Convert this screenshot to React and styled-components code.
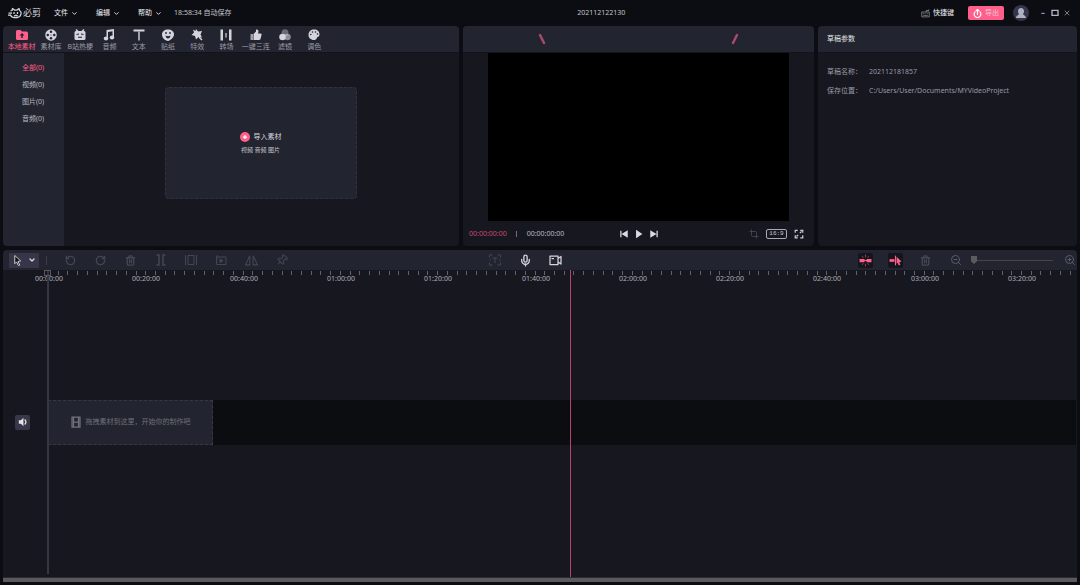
import React from 'react';
import styled, { createGlobalStyle } from 'styled-components';
import { ChevronDown, RotateCcw, RotateCw, Trash2, Pin, Mic, ZoomIn, ZoomOut, Crop, X } from 'lucide-react';

const PINK = '#ff5f8b';
const PX_PER_TICK = 9.73;
const TICK_COUNT = 106;
const LABEL_COUNT = 11;

const GlobalStyle = createGlobalStyle`
* {
  box-sizing: border-box;
}

body {
  margin: 0;
  background-color: #0c0d12;
  color: #b9bac2;
  font-family: "Noto Sans", "Noto Sans CJK SC", sans-serif;
  font-size: 7px;
  line-height: 10px;
}

button {
  margin: 0;
  padding: 0;
  border: 0;
  background: none;
  color: inherit;
  font: inherit;
  cursor: pointer;
}

svg {
  display: block;
  flex: none;
}
`;

const Page = styled.div`
  display: flex;
  flex-direction: column;
  min-height: 100vh;
  padding: 0 3px 3px;
`;

const TitleBar = styled.header`
  display: flex;
  align-items: center;
  height: 26px;
  padding: 0 6px 0 5px;
`;

const Brand = styled.div`
  display: flex;
  align-items: center;
  gap: 1px;
  width: 46px;
  font-size: 9px;
  color: #d6d7de;
`;

const MenuButton = styled.button`
  display: flex;
  align-items: center;
  gap: 3px;
  width: 42px;
  color: #eeeef2;
`;

const AutoSave = styled.span`
  white-space: nowrap;
  margin-left: -6px;
  color: #c3c4cb;
`;

const ProjectTitle = styled.h1`
  flex: 1;
  margin: 0;
  padding-left: 50px;
  text-align: center;
  font-size: 7px;
  font-weight: normal;
  color: #c3c4cb;
`;

const Shortcut = styled.button`
  display: flex;
  align-items: center;
  gap: 3px;
  margin-right: 14px;
  color: #eeeef2;
`;

const ExportButton = styled.button`
  display: flex;
  align-items: center;
  justify-content: center;
  gap: 3px;
  width: 36px;
  height: 14px;
  border-radius: 2px;
  background-color: ${PINK};
  color: #ffc4d4;
`;

const Avatar = styled.button`
  margin: 0 10px 0 9px;
`;

const WindowButtons = styled.div`
  display: flex;
  align-items: center;
  gap: 4px;
  color: #b3b4c4;
`;

const Workspace = styled.main`
  display: grid;
  grid-template-columns: 456fr 351fr 259fr;
  gap: 4px;
`;

const Panel = styled.section`
  display: flex;
  flex-direction: column;
  min-width: 0;
  border-radius: 4px;
  background-color: #171720;
  overflow: hidden;
`;

const PanelHeader = styled.div`
  display: flex;
  align-items: center;
  height: 27px;
  flex: none;
  background-color: #22242f;
  border-bottom: 1px solid #13131b;
`;

const TabBar = styled(PanelHeader)`
  padding-left: 4px;
`;

const Tabs = styled.div`
  display: flex;
  width: 322px;
  padding-top: 2px;
`;

const Tab = styled.button`
  flex: 1 1 0;
  display: flex;
  flex-direction: column;
  align-items: center;
  gap: 1px;
  white-space: nowrap;
  color: ${(props) => (props.$active ? PINK : '#9c9da8')};

  svg {
    color: ${(props) => (props.$active ? PINK : '#d3d4de')};
  }
`;

const LibraryBody = styled.div`
  display: flex;
  flex: 1;
`;

const Categories = styled.nav`
  display: flex;
  flex-direction: column;
  width: 61px;
  padding-top: 6px;
  background-color: #22242f;
`;

const Category = styled.button`
  height: 17px;
  padding-right: 1px;
  color: ${(props) => (props.$active ? PINK : '#b9bac2')};
`;

const MediaArea = styled.div`
  flex: 1;
  display: flex;
  align-items: flex-start;
  justify-content: center;
  padding: 34px 2px 0 0;
`;

const DropZone = styled.button`
  display: flex;
  flex-direction: column;
  align-items: center;
  justify-content: center;
  gap: 3px;
  width: 192px;
  height: 112px;
  border: 1px dashed #2f313d;
  border-radius: 4px;
  background-color: #22242f;
`;

const DropTitle = styled.span`
  display: flex;
  align-items: center;
  gap: 4px;
  color: #d6d7de;
`;

const DropHint = styled.span`
  font-size: 6px;
  color: #c3c4cb;
`;

const PreviewHeader = styled(PanelHeader)`
  justify-content: space-between;
  padding: 0 75px;
`;

const Screen = styled.div`
  height: 168px;
  margin: 0 25px;
  background-color: #000;
`;

const PlayerBar = styled.div`
  display: grid;
  grid-template-columns: 1fr auto 1fr;
  align-items: center;
  height: 25px;
  padding: 0 6px;
`;

const Times = styled.div`
  display: flex;
  align-items: center;
`;

const CurrentTime = styled.span`
  color: #c74a70;
`;

const TimeDivider = styled.span`
  width: 1px;
  height: 6px;
  margin: 0 10px 0 9px;
  background-color: #6d6e79;
`;

const Transport = styled.div`
  display: flex;
  gap: 5px;
  color: #d9dae3;
`;

const ViewTools = styled.div`
  display: flex;
  justify-content: flex-end;
  align-items: center;
  gap: 7px;
  padding-right: 4px;
  color: #c8c9d2;
`;

const Ratio = styled.button`
  width: 21px;
  height: 10px;
  border: 1px solid #a9aab4;
  border-radius: 2px;
  font-family: "Liberation Mono", monospace;
  font-size: 6px;
  line-height: 8px;
`;

const CropButton = styled.button`
  color: #484956;
`;

const ParamsHeader = styled(PanelHeader)`
  padding-left: 9px;
  color: #e4e4ea;
`;

const Params = styled.dl`
  display: grid;
  grid-template-columns: 42px 1fr;
  row-gap: 9px;
  margin: 0;
  padding: 14px 9px;
  color: #9899a3;

  dt, dd {
    margin: 0;
    white-space: nowrap;
  }
`;

const Timeline = styled(Panel)`
  flex: 1;
  margin-top: 4px;
  border-radius: 4px 4px 0 0;
`;

const Toolbar = styled.div`
  display: flex;
  align-items: center;
  height: 20px;
  flex: none;
  padding-left: 6px;
  background-color: #22242f;
`;

const SelectMode = styled.button`
  display: flex;
  align-items: center;
  justify-content: space-around;
  width: 30px;
  height: 15px;
  border-radius: 1px;
  background-color: #353748;
  color: #d6d7de;
`;

const Divider = styled.span`
  width: 1px;
  height: 9px;
  margin: 0 8px 0 7px;
  background-color: #3b3c47;
`;

const ToolGroup = styled.div`
  display: flex;
  width: ${(props) => props.$width}px;
`;

const Tool = styled.button`
  flex: 1 1 0;
  display: flex;
  align-items: center;
  justify-content: center;
  height: 16px;
  color: ${(props) => (props.$bright ? '#d3d4de' : '#444656')};
`;

const Spacer = styled.span`
  flex: ${(props) => props.$grow} 1 0;
`;

const ToggleBox = styled.span`
  display: flex;
  align-items: center;
  justify-content: center;
  width: 15px;
  height: 15px;
  border-radius: 2px;
  background-color: #15151d;
`;

const ZoomSlider = styled.input`
  appearance: none;
  width: 82px;
  height: 10px;
  margin: 0 11px 0 0;
  background: linear-gradient(#45464a, #45464a) center / 100% 1px no-repeat;

  &::-webkit-slider-thumb {
    appearance: none;
    width: 6px;
    height: 8px;
    background-color: #5b5b5e;
    clip-path: polygon(0 0, 100% 0, 100% 65%, 50% 100%, 0 65%);
  }
`;

const ZoomInButton = styled.button`
  margin-right: 1px;
  color: #5b5d70;
`;

const ZoomOutButton = styled(Tool)`
  color: #5b5d70;
`;

const TimelineBody = styled.div`
  position: relative;
  display: flex;
  flex-direction: column;
  flex: 1;
  padding-left: 45px;
  overflow: hidden;
`;

const Ruler = styled.div`
  position: relative;
  height: 14px;
`;

const Tick = styled.span`
  position: absolute;
  top: 1px;
  width: 1px;
  height: 4px;
  background-color: #62636c;
`;

const TickLabel = styled.span`
  position: absolute;
  top: 4px;
  width: 30px;
  margin-left: -14px;
  text-align: center;
  color: #aeafb8;
`;

const Tracks = styled.div`
  display: flex;
  align-items: center;
  flex: 1;
  padding: 0 1px 17px 0;
`;

const Track = styled.div`
  display: flex;
  align-items: center;
  flex: 1;
  margin-left: -33px;
`;

const MuteButton = styled.button`
  display: flex;
  align-items: center;
  justify-content: center;
  width: 15px;
  height: 15px;
  margin-right: 18px;
  border-radius: 2px;
  background-color: #363849;
  color: #e4e4ea;
`;

const Lane = styled.div`
  flex: 1;
  height: 45px;
  background-color: #0c0d11;
`;

const ClipHint = styled.div`
  display: flex;
  align-items: center;
  justify-content: center;
  gap: 5px;
  width: 165px;
  height: 45px;
  border: 1px dashed #363844;
  background-color: #22242f;
  color: #70717a;
  white-space: nowrap;
`;

const StartLine = styled.div`
  position: absolute;
  top: 0;
  bottom: 3px;
  left: 44px;
  width: 2px;
  background-color: #353641;
`;

const StartHandle = styled.div`
  position: absolute;
  top: 0;
  left: 41px;
  width: 7px;
  height: 6px;
  border: 1px solid #575863;
`;

const Playhead = styled.div`
  position: absolute;
  top: 0;
  bottom: 0;
  width: 1px;
  background-color: #b9436a;
`;

const ScrollBar = styled.div`
  height: 5px;
  border-top: 1px solid #2b2b33;
  background-color: #5a5a5c;
`;

const Svg = ({ size = 12, children, ...rest }) => (
  <svg width={size} height={size} viewBox="0 0 24 24" fill="none" stroke="currentColor" strokeWidth="2" aria-hidden="true" {...rest}>
    {children}
  </svg>
);

const Solid = ({ children, ...rest }) => (
  <Svg fill="currentColor" stroke="none" {...rest}>{children}</Svg>
);

const HOLE = '#22242f';

const tabs = [
  {
    label: '本地素材',
    icon: <><path d="M0 5q0-3 3-3h6l3 3h9q3 0 3 3v11q0 3-3 3H3q-3 0-3-3z" /><path d="M12 8l5 5h-3.500v5h-3v-5H7z" fill={HOLE} /></>,
  },
  {
    label: '素材库',
    icon: <><circle cx="12" cy="12" r="11.500" /><g fill={HOLE}><circle cx="12" cy="5.500" r="2.500" /><circle cx="12" cy="18.500" r="2.500" /><circle cx="5.500" cy="12" r="2.500" /><circle cx="18.500" cy="12" r="2.500" /><circle cx="12" cy="12" r="1" /></g></>,
  },
  {
    label: 'B站热梗',
    icon: <><path d="M5 0l4 4h6l4-4 2 2-2 2h1q3 0 3 3v12q0 3-3 3H4q-3 0-3-3V7q0-3 3-3h1L3 2z" /><path d="M5 11l5-1M19 11l-5-1M8 16q2 2 4 0q2 2 4 0" stroke={HOLE} strokeWidth="2" fill="none" /></>,
  },
  {
    label: '音频',
    icon: <><path d="M7 2l15-2v4L10 6v13H7z" /><path d="M19 2h3v14h-3z" /><ellipse cx="6" cy="19" rx="4.500" ry="4" /><ellipse cx="18" cy="17" rx="4.500" ry="4" /></>,
  },
  { label: '文本', icon: <><path d="M1 1h22v4H1z" /><path d="M10 5h4v18h-4z" opacity="0.7" /></> },
  {
    label: '贴纸',
    icon: <><path d="M12 1C5 1 0 5 0 11c0 7 6 12 12 13 4-1 12-7 12-13 0-6-5-10-12-10z" /><g fill={HOLE}><circle cx="8" cy="8" r="1.800" /><circle cx="16" cy="8" r="1.800" /><path d="M7 13q5 3 10 0-1 6-5 6t-5-6z" /></g></>,
  },
  {
    label: '特效',
    icon: <><path d="M10 0l4 5 8-1-3 7 3 6-7-1-5 5-2-7-7-2 5-5-2-6 5 3z" /><path d="M16 16l6 6" stroke="currentColor" strokeWidth="3" /></>,
  },
  {
    label: '转场',
    icon: <><path d="M1 1h5v22H1zM18 1h5v22h-5z" /><path d="M10 8h4v9h-4z" opacity="0.6" /></>,
  },
  {
    label: '一键三连',
    icon: <><path d="M1 10h5v12H1z" opacity="0.7" /><path d="M7 10l5-5V1q5-1 5 4l-1 4h5q3 0 2 3l-2 8q-1 2-3 2H7z" /></>,
  },
  {
    label: '滤镜',
    icon: <><circle cx="12" cy="7.500" r="7" opacity="0.4" /><circle cx="17" cy="16" r="6.500" opacity="0.6" /><circle cx="7" cy="16" r="6.500" /></>,
  },
  {
    label: '调色',
    icon: <><path d="M12 1c7 0 11 4 11 10 0 3-2 5-4 5-2 1-1 6-7 6C5 22 1 17 1 12 1 5 6 1 12 1z" /><g fill={HOLE}><circle cx="5.500" cy="11" r="1.600" /><circle cx="9" cy="6" r="1.600" /><circle cx="15" cy="6" r="1.600" /><circle cx="19" cy="10" r="1.600" /></g></>,
  },
];

const categories = ['全部(0)', '视频(0)', '图片(0)', '音频(0)'];

const editTools = [
  { name: '撤销', icon: <RotateCcw size={11} strokeWidth={3} /> },
  { name: '重做', icon: <RotateCw size={11} strokeWidth={3} /> },
  { name: '删除', icon: <Trash2 size={11} strokeWidth={3} /> },
  { name: '分割', icon: <Svg strokeWidth="3"><path d="M3 2h5v20H3M21 2h-5v20h5" /></Svg> },
  { name: '裁剪', icon: <Svg><path d="M1 2v20M23 2v20M6 3h12v18H6z" /></Svg> },
  { name: '倒放', icon: <Svg><path d="M3 9v12h19V6H3M6 2L2 6l4 4" /><path d="M10 10l6 3.500-6 3.500z" fill="currentColor" /></Svg> },
  { name: '镜像', icon: <Svg size={13}><path d="M9 3v17H1zM15 3v17h8z" /></Svg> },
  { name: '定格', icon: <Pin size={12} transform="rotate(45)" /> },
];

const formatTime = (seconds) => {
  const minutes = String(Math.floor(seconds / 60)).padStart(2, '0');
  const rest = String(seconds % 60).padStart(2, '0');
  return `${minutes}:${rest}:00`;
};

function TopBar() {
  return (
    <TitleBar>
      <Brand>
        <svg width="14" height="12" viewBox="0 0 28 24" fill="none" stroke="currentColor" strokeWidth="2.500" strokeLinejoin="round" aria-hidden="true">
          <path d="M5 8l3-1 1-4 4 3h5l4-3 1 4q4 2 3 7-1 6-7 7h-8q-5-1-6-5" />
          <path d="M1 12h7M0 16h6M12 10v4M19 10v4M12 17q2 2 4-1 1 3 4 1" />
        </svg>
        必剪
      </Brand>
      {['文件', '编辑', '帮助'].map((name) => (
        <MenuButton key={name}>{name}<ChevronDown size={7} strokeWidth={3} /></MenuButton>
      ))}
      <AutoSave>18:58:34 自动保存</AutoSave>
      <ProjectTitle>202112122130</ProjectTitle>
      <Shortcut>
        <Svg size={9} opacity="0.6"><path d="M2 8h20v13H2zM14 8V4h7V1M6 12h3M12 12h2M17 12h2M6 17h12" /></Svg>
        快捷键
      </Shortcut>
      <ExportButton>
        <Svg size={9} stroke="#fff" strokeWidth="3"><path d="M6 7a9 9 0 1 0 12 0M12 16V2M7 6l5-5 5 5" /></Svg>
        导出
      </ExportButton>
      <Avatar aria-label="用户">
        <svg width="16" height="16" viewBox="0 0 32 32" aria-hidden="true">
          <circle cx="16" cy="16" r="16" fill="#34364a" />
          <path d="M16 6c4 0 6 3 6 6 0 4-1 5-2 6 0 2 6 3 6 8H6c0-5 6-6 6-8-1-1-2-2-2-6 0-3 2-6 6-6z" fill="#aeb0c3" />
        </svg>
      </Avatar>
      <WindowButtons>
        <button aria-label="最小化"><Svg size={8}><path d="M7 13h10" strokeWidth="3" /></Svg></button>
        <button aria-label="最大化"><Svg size={8}><path d="M3 4h18v15H3z" strokeWidth="4" /></Svg></button>
        <button aria-label="关闭"><X size={8} /></button>
      </WindowButtons>
    </TitleBar>
  );
}

function Library() {
  return (
    <Panel>
      <TabBar>
        <Tabs>
          {tabs.map((tab, i) => (
            <Tab key={tab.label} $active={i === 0}>
              <Solid size={12}>{tab.icon}</Solid>
              {tab.label}
            </Tab>
          ))}
        </Tabs>
      </TabBar>
      <LibraryBody>
        <Categories>
          {categories.map((name, i) => (
            <Category key={name} $active={i === 0}>{name}</Category>
          ))}
        </Categories>
        <MediaArea>
          <DropZone>
            <DropTitle>
              <Svg size={10}>
                <circle cx="12" cy="12" r="12" fill={PINK} stroke="none" />
                <path d="M12 7v10M7 12h10" stroke="#fff" strokeWidth="3" />
              </Svg>
              导入素材
            </DropTitle>
            <DropHint>视频 音频 图片</DropHint>
          </DropZone>
        </MediaArea>
      </LibraryBody>
    </Panel>
  );
}

function Preview() {
  return (
    <Panel>
      <PreviewHeader>
        <svg width="8" height="12" viewBox="0 0 8 12" stroke="#a84a6b" strokeWidth="2.500" strokeLinecap="round" aria-hidden="true"><path d="M2 2l4 8" /></svg>
        <svg width="8" height="12" viewBox="0 0 8 12" stroke="#a84a6b" strokeWidth="2.500" strokeLinecap="round" aria-hidden="true"><path d="M6 2l-4 8" /></svg>
      </PreviewHeader>
      <Screen />
      <PlayerBar>
        <Times>
          <CurrentTime>00:00:00:00</CurrentTime>
          <TimeDivider />
          <span>00:00:00:00</span>
        </Times>
        <Transport>
          <button aria-label="上一帧"><Solid size={10}><path d="M3 4h3v16H3zM21 3v18L6 12z" /></Solid></button>
          <button aria-label="播放"><Solid size={10}><path d="M5 2l15 10L5 22z" /></Solid></button>
          <button aria-label="下一帧"><Solid size={10}><path d="M18 4h3v16h-3zM3 3v18l15-9z" /></Solid></button>
        </Transport>
        <ViewTools>
          <CropButton aria-label="裁剪"><Crop size={10} /></CropButton>
          <Ratio>16:9</Ratio>
          <button aria-label="全屏"><Svg size={10} strokeWidth="3"><path d="M3 9V3h6M15 3h6v6M21 15v6h-6M9 21H3v-6M14 10l4-4M10 14l-4 4" /></Svg></button>
        </ViewTools>
      </PlayerBar>
    </Panel>
  );
}

function DraftParams() {
  return (
    <Panel>
      <ParamsHeader>草稿参数</ParamsHeader>
      <Params>
        <dt>草稿名称：</dt>
        <dd>202112181857</dd>
        <dt>保存位置：</dt>
        <dd>C:/Users/User/Documents/MYVideoProject</dd>
      </Params>
    </Panel>
  );
}

function TimelineToolbar() {
  return (
    <Toolbar>
      <SelectMode aria-label="选择模式">
        <Svg size={11}><path d="M6 1l13 12-6 1 4 8-3 1-4-8-4 4z" fill="#111" /></Svg>
        <ChevronDown size={8} strokeWidth={4} />
      </SelectMode>
      <Divider />
      <ToolGroup $width={242}>
        {editTools.map((tool) => (
          <Tool key={tool.name} aria-label={tool.name}>{tool.icon}</Tool>
        ))}
      </ToolGroup>
      <Spacer $grow={183} />
      <ToolGroup $width={91}>
        <Tool aria-label="语音转字幕">
          <Svg><path d="M1 7V2h6M17 2h6v5M23 17v5h-6M7 22H1v-5M7 8h10M12 8v10M1 12h3M20 12h3" /></Svg>
        </Tool>
        <Tool aria-label="录音" $bright><Mic size={13} strokeWidth={2.5} /></Tool>
        <Tool aria-label="录屏" $bright>
          <svg width="13" height="12" viewBox="0 0 26 24" fill="none" stroke="currentColor" strokeWidth="2.500" strokeLinejoin="round" aria-hidden="true">
            <path d="M2 4h16v17H2zM5 9h5M18 9l6-4v15l-6-4" />
          </svg>
        </Tool>
      </ToolGroup>
      <Spacer $grow={280} />
      <ToolGroup $width={121}>
        <Tool aria-label="自动吸附">
          <ToggleBox>
            <Svg size={13} stroke={PINK}><path d="M1 12h9M14 12h9" strokeWidth="6" /><path d="M9 12h6" strokeWidth="2" /><path d="M12 1v5M12 18v5M6 4l2 3M18 4l-2 3M6 20l2-3M18 20l-2-3" strokeWidth="1" /></Svg>
          </ToggleBox>
        </Tool>
        <Tool aria-label="联动">
          <ToggleBox>
            <Svg size={13} stroke={PINK}><path d="M1 12h9" strokeWidth="5" /><path d="M12 3v18" /><path d="M14 5l9 9-4 1 2 5-3 1-2-5-2 2z" fill={PINK} stroke="none" /></Svg>
          </ToggleBox>
        </Tool>
        <Tool aria-label="清空"><Trash2 size={11} strokeWidth={3} /></Tool>
        <ZoomOutButton aria-label="缩小"><ZoomOut size={12} /></ZoomOutButton>
      </ToolGroup>
      <ZoomSlider type="range" min="0" max="100" defaultValue="0" aria-label="时间轴缩放" />
      <ZoomInButton aria-label="放大"><ZoomIn size={12} /></ZoomInButton>
    </Toolbar>
  );
}

function App() {
  const playhead = 45 + Math.round(53.65 * PX_PER_TICK);

  return (
    <>
      <GlobalStyle />
      <Page>
        <TopBar />
        <Workspace>
          <Library />
          <Preview />
          <DraftParams />
        </Workspace>
        <Timeline>
          <TimelineToolbar />
          <TimelineBody>
            <Ruler>
              {Array.from({ length: TICK_COUNT }, (_, i) => (
                <Tick key={i} style={{ left: Math.round(i * PX_PER_TICK) }} />
              ))}
              {Array.from({ length: LABEL_COUNT }, (_, i) => (
                <TickLabel key={i} style={{ left: Math.round(i * 10 * PX_PER_TICK) }}>{formatTime(i * 20)}</TickLabel>
              ))}
            </Ruler>
            <Tracks>
              <Track>
                <MuteButton aria-label="静音">
                  <Svg size={10}><path d="M2 8h5l6-6v20l-6-6H2z" fill="currentColor" stroke="none" /><path d="M16 6q6 6 0 12" strokeWidth="3" /></Svg>
                </MuteButton>
                <Lane>
                  <ClipHint>
                    <svg width="10" height="12" viewBox="0 0 20 24" fill="none" stroke="currentColor" strokeWidth="2.500" aria-hidden="true">
                      <path d="M2 2h16v20H2zM5 2v20M15 2v20M5 12h10" />
                    </svg>
                    拖拽素材到这里，开始你的制作吧
                  </ClipHint>
                </Lane>
              </Track>
            </Tracks>
            <StartLine />
            <StartHandle />
            <Playhead style={{ left: playhead }} />
          </TimelineBody>
        </Timeline>
        <ScrollBar />
      </Page>
    </>
  );
}

export default App;
